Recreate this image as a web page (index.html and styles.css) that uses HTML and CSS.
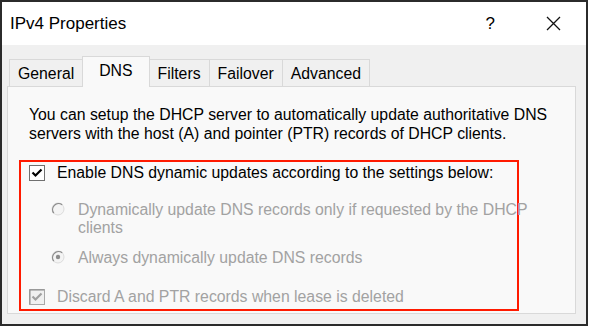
FILE: index.html
```html
<!DOCTYPE html>
<html lang="en">
<head>
  <meta charset="UTF-8">
  <title>IPv4 Properties</title>
  <link rel="stylesheet" href="styles.css">
</head>
<body>

  <!-- Dialog -->
  <div class="window">
    <div class="titlebar">
      <span class="title">IPv4 Properties</span>
      <span class="help">?</span>
      <svg class="close" width="15" height="15" viewBox="0 0 15 15">
        <path d="M1 1 L14 14 M14 1 L1 14" stroke="#111" stroke-width="1.3" fill="none"/>
      </svg>
    </div>

    <div class="dialog-body">
      <!-- Tabs -->
      <div class="tabs">
        <div class="tab">General</div>
        <div class="tab active">DNS</div>
        <div class="tab">Filters</div>
        <div class="tab">Failover</div>
        <div class="tab">Advanced</div>
      </div>

      <!-- Tab DNS -->
      <div class="panel">
        <p class="desc">You can setup the DHCP server to automatically update authoritative DNS servers with the host (A) and pointer (PTR) records of DHCP clients.</p>

        <div class="highlight">
          <div class="check-row">
            <svg class="checkbox" width="16" height="16" viewBox="0 0 16 16">
              <rect x="0.5" y="0.5" width="15" height="15" fill="#fff" stroke="#707070"/>
              <path d="M3.5 7.5 L6.5 10.5 L12.5 4.5" stroke="#000" stroke-width="2.2" fill="none"/>
            </svg>
            <span>Enable DNS dynamic updates according to the settings below:</span>
          </div>

          <div class="radio-list">
            <div class="radio-row">
              <svg class="radio" width="14" height="14" viewBox="0 0 14 14">
                <circle cx="7" cy="7" r="6" fill="#f4f4f4" stroke="#dcdcdc"/>
                <path d="M11.2 2.8 A6 6 0 0 0 2.8 11.2" stroke="#8c8c8c" stroke-width="1.3" fill="none"/>
              </svg>
              <span class="radio-text">Dynamically update DNS records only if requested by the DHCP clients</span>
            </div>
            <div class="radio-row second">
              <svg class="radio" width="14" height="14" viewBox="0 0 14 14">
                <circle cx="7" cy="7" r="6" fill="#f4f4f4" stroke="#dcdcdc"/>
                <path d="M11.2 2.8 A6 6 0 0 0 2.8 11.2" stroke="#8c8c8c" stroke-width="1.3" fill="none"/>
                <circle cx="7" cy="7" r="2.2" fill="#8c8c8c"/>
              </svg>
              <span class="radio-text">Always dynamically update DNS records</span>
            </div>
          </div>

          <div class="check-row disabled">
            <svg class="checkbox" width="16" height="16" viewBox="0 0 16 16">
              <rect x="0.5" y="0.5" width="15" height="15" fill="#f0f0f0" stroke="#a8a8a8"/>
              <path d="M1 15 L1 1 L15 1" stroke="#8a8a8a" stroke-width="1" fill="none"/>
              <path d="M3.5 7.5 L6.5 10.5 L12.5 4.5" stroke="#a0a0a0" stroke-width="2.2" fill="none"/>
            </svg>
            <span>Discard A and PTR records when lease is deleted</span>
          </div>
        </div>
      </div>
    </div>
  </div>

</body>
</html>
```

FILE: styles.css
```css
/* Reset */
* {
  margin: 0;
  padding: 0;
  box-sizing: border-box;
}
body {
  font-family: 'Liberation Sans', Arial, sans-serif;
  background: #ffffff;
  color: #000;
}
/* Window */
.window {
  width: 588px;
  height: 326px;
  border: 2px solid #2b2b2b;
  background: #f0f0f0;
  display: flex;
  flex-direction: column;
}
.titlebar {
  height: 43px;
  background: #ffffff;
  display: flex;
  align-items: center;
  padding: 0 25px 0 8px;
  font-size: 17px;
}
.title {
  flex: 1;
}
.help {
  margin-right: 51px;
}
.close {
  display: block;
}
/* Tabs */
.dialog-body {
  flex: 1;
  padding: 11px 10px 0 5px;
}
.tabs {
  display: flex;
  align-items: flex-end;
  padding-left: 2px;
  font-size: 15.8px;
}
.tab {
  height: 27px;
  padding: 2px 8px 0;
  border: 1px solid #d9d9d9;
  border-bottom: none;
  margin-left: -1px;
  display: flex;
  align-items: center;
  background: #f0f0f0;
}
.tab:first-child {
  margin-left: 0;
}
.tab.active {
  height: 31px;
  padding: 0 16px 3px;
  margin-bottom: -1px;
  background: #f9f9f9;
  position: relative;
  z-index: 1;
}
/* Panel */
.panel {
  height: 228px;
  border: 1px solid #d9d9d9;
  background: #f9f9f9;
  padding: 19px 0 0 11px;
  font-size: 15.8px;
  line-height: 18.5px;
}
.desc {
  width: 540px;
  padding-left: 10px;
}
.highlight {
  width: 500px;
  margin-top: 17px;
  border: 2px solid #ff1a00;
  padding: 2px 0 2px 8px;
}
.check-row {
  display: flex;
  align-items: center;
  gap: 12px;
  white-space: nowrap;
}
.checkbox {
  flex: none;
  display: block;
}
.disabled {
  color: #a2a2a2;
  margin-top: 21px;
}
.radio-list {
  margin-top: 18px;
  padding-left: 22px;
  color: #a2a2a2;
}
.radio-row {
  display: flex;
  align-items: flex-start;
  gap: 13px;
}
.radio-row.second {
  margin-top: 11px;
}
.radio {
  flex: none;
  display: block;
  margin-top: 1px;
}
.radio-text {
  width: 460px;
  flex: none;
}
```
